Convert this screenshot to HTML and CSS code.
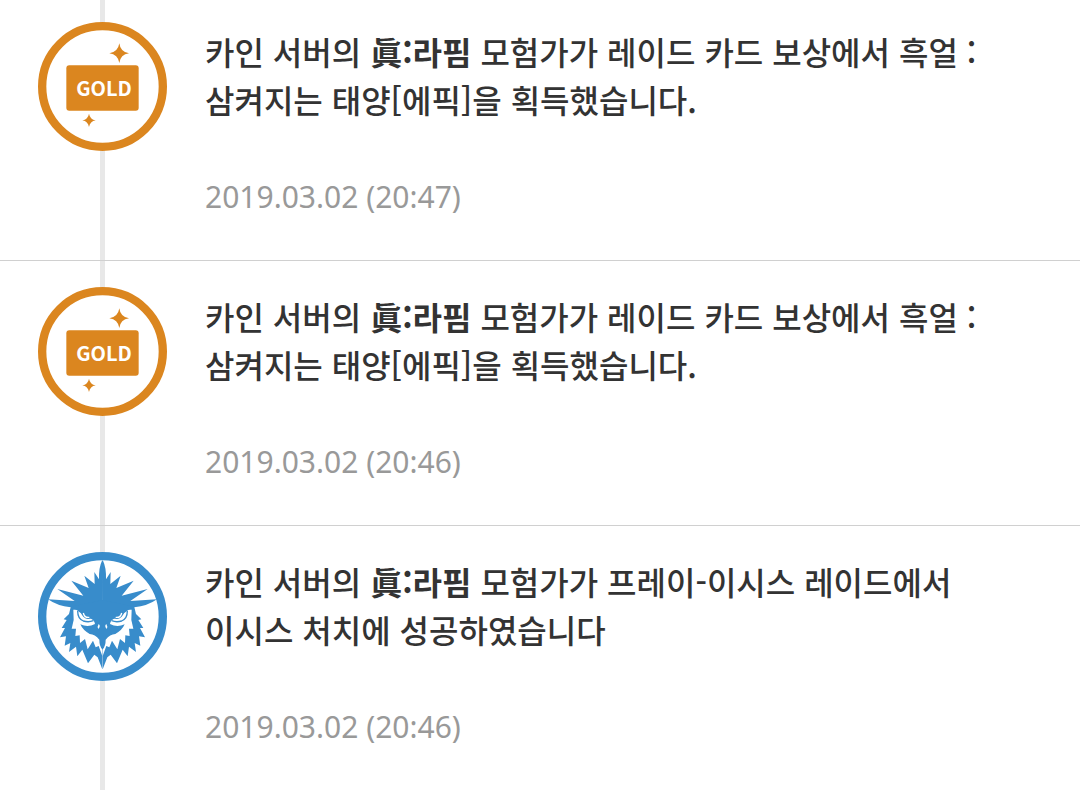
FILE: index.html
```html
<!DOCTYPE html>
<html lang="ko">
<head>
    <meta charset="UTF-8">
    <meta name="viewport" content="width=device-width, initial-scale=1.0">
    <title>타임라인</title>
    <link rel="stylesheet" href="styles.css">
</head>
<body>
    <ul class="timeline">
        <li class="timeline-item">
            <svg class="icon" viewBox="24 36 387 387">
                <circle cx="217.5" cy="229.5" r="181" fill="#fff" stroke="#db861f" stroke-width="25"/>
                <rect x="109" y="166" width="217" height="136" rx="9" fill="#db861f"/>
                <path fill="#db861f" d="M268 100Q271 126 297 130Q271 134 268 159Q264 134 238 130Q264 126 268 100ZM177 311Q180 328 197 331Q180 334 177 351Q174 334 157 331Q174 328 177 311Z"/>
                <text class="gold-text" x="222" y="259" text-anchor="middle">GOLD</text>
            </svg>
            <div class="content">
                <p class="message">카인 서버의 <strong>眞:라핌</strong> 모험가가 레이드 카드 보상에서 흑얼 : 삼켜지는 태양[에픽]을 획득했습니다.</p>
                <time class="date" datetime="2019-03-02T20:47">2019.03.02 (20:47)</time>
            </div>
        </li>
        <li class="timeline-item">
            <svg class="icon" viewBox="24 36 387 387">
                <circle cx="217.5" cy="229.5" r="181" fill="#fff" stroke="#db861f" stroke-width="25"/>
                <rect x="109" y="166" width="217" height="136" rx="9" fill="#db861f"/>
                <path fill="#db861f" d="M268 100Q271 126 297 130Q271 134 268 159Q264 134 238 130Q264 126 268 100ZM177 311Q180 328 197 331Q180 334 177 351Q174 334 157 331Q174 328 177 311Z"/>
                <text class="gold-text" x="222" y="259" text-anchor="middle">GOLD</text>
            </svg>
            <div class="content">
                <p class="message">카인 서버의 <strong>眞:라핌</strong> 모험가가 레이드 카드 보상에서 흑얼 : 삼켜지는 태양[에픽]을 획득했습니다.</p>
                <time class="date" datetime="2019-03-02T20:46">2019.03.02 (20:46)</time>
            </div>
        </li>
        <li class="timeline-item">
            <svg class="icon" viewBox="24 36 387 387" role="img" aria-label="이시스">
                <circle cx="217.5" cy="229.5" r="181" fill="#fff" stroke="#388ccb" stroke-width="25"/>
                <g id="isis-half">
                    <!-- crown and feathers -->
                    <path fill="#388ccb" d="M219 62L216 62Q206 82 207 118L193 96L194 132L163 107L176 144L124 122L160 167L82 147L134 183L54 178Q82 198 122 202L117 222L101 238L110 240L95 264L105 264L90 292L108 289L104 317L121 309L117 336L138 320L142 349L157 329L174 370L193 344L203 352L217 388L217 388Z"/>
                    <!-- face -->
                    <path fill="#fff" d="M130 209L217 209L217 348L206 318L197 322L189 302L173 328L165 297L150 309L149 286L136 288L138 266L125 266L131 240Z"/>
                    <!-- brow and beak -->
                    <path fill="#388ccb" d="M122 200L219 180L219 328L217 328Q208 318 208 299Q195 283 179 282Q158 270 151 253Q174 263 195 252Q193 240 180 235Q158 226 140 210Z"/>
                    <!-- eye -->
                    <path fill="none" stroke="#388ccb" stroke-width="4" d="M143 213Q143 236 160 243Q176 248 190 242"/>
                    <path fill="#388ccb" d="M152 217L186 234Q162 244 152 217Z"/>
                    <path fill="none" stroke="#fff" stroke-width="4" d="M160 219Q163 234 178 232"/>
                    <path fill="#fff" d="M206 252Q213 257 205 267Q201 260 206 252Z"/>
                </g>
                <use href="#isis-half" transform="translate(435 0) scale(-1 1)"/>
            </svg>
            <div class="content">
                <p class="message">카인 서버의 <strong>眞:라핌</strong> 모험가가 프레이-이시스 레이드에서 이시스 처치에 성공하였습니다</p>
                <time class="date" datetime="2019-03-02T20:46">2019.03.02 (20:46)</time>
            </div>
        </li>
    </ul>
</body>
</html>
```
FILE: styles.css
```css
body {
    margin: 0;
    background-color: #fff;
    color: #333;
    font-family: "Noto Sans CJK KR", sans-serif;
}

/* Vertical line behind the icons */
.timeline {
    margin: 0;
    padding: 0;
    list-style: none;
    background: linear-gradient(#e8e8e8, #e8e8e8) 100px 0 / 5px 100% no-repeat;
}

.timeline-item {
    display: flex;
    align-items: flex-start;
    gap: 38px;
    padding: 26px 80px 39px 38px;
    border-bottom: 1px solid #d0d0d0;
}

.timeline-item:first-child {
    padding-top: 22px;
}

.timeline-item:last-child {
    border-bottom: none;
}

.icon {
    flex: none;
    width: 129px;
    height: 129px;
}

.gold-text {
    fill: #fff;
    font-size: 60px;
    font-weight: bold;
}

.content {
    flex: 1;
    padding-top: 5px;
}

.message {
    margin: 0 0 50px;
    font-size: 32px;
    font-weight: 500;
    line-height: 48px;
    word-break: keep-all;
}

.date {
    display: block;
    color: #999;
    font-family: "Noto Sans", sans-serif;
    font-size: 30px;
    line-height: 48px;
}
```
